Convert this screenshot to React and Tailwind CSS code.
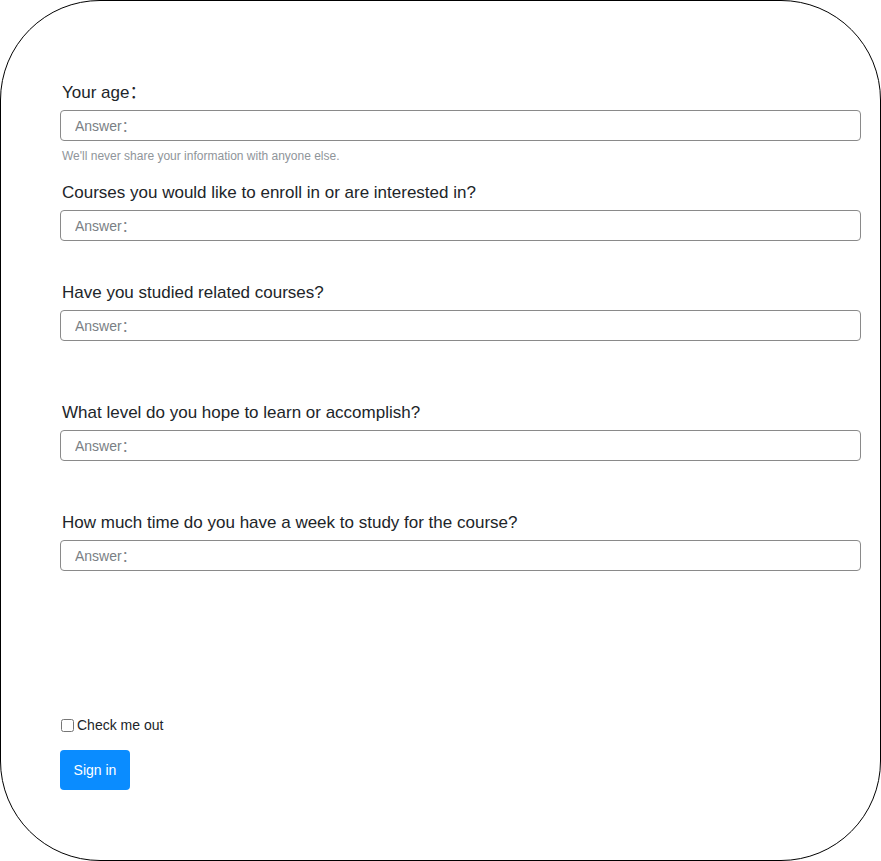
import React from 'react';

const questions = [
    { label: 'Your age：', help: true, top: 'mt-[79px]' },
    { label: 'Courses you would like to enroll in or are interested in?', top: 'mt-[16px]' },
    { label: 'Have you studied related courses?', top: 'mt-[39px]' },
    { label: 'What level do you hope to learn or accomplish?', top: 'mt-[59px]' },
    { label: 'How much time do you have a week to study for the course?', top: 'mt-[49px]' },
];

const Field = ({ q }) => (
    <div className={q.top}>
        <label className="block text-[17px] leading-6 text-[#212529] pl-[2px] pt-[1px] mb-[5px]">{q.label}</label>
        <input
            type="text"
            placeholder="Answer："
            className="block w-full h-[31px] border border-[#8a8a8a] rounded-[4px] px-[14px] text-[14px] placeholder:text-[#7a7f85] outline-none"
        />
        {q.help && (
            <small className="block mt-[7px] pl-[2px] text-[12px] leading-4 text-[#8f959a]">
                We'll never share your information with anyone else.
            </small>
        )}
    </div>
);

export default function App() {
    return (
        <div className="w-[881px] h-[861px] bg-white font-['Liberation_Sans','Noto_Sans_CJK_SC',sans-serif]">
            <form className="w-full h-full border border-black rounded-[100px] pl-[59px] pr-[19px]">
                {questions.map((q, i) => (
                    <Field key={i} q={q} />
                ))}
                <div className="mt-[144px] flex items-center gap-[3px] pl-[1px] h-5">
                    <input type="checkbox" className="w-[13px] h-[13px] m-0" />
                    <span className="text-[14px] leading-5 text-[#212529]">Check me out</span>
                </div>
                <button
                    type="button"
                    className="mt-[15px] w-[70px] h-[40px] pt-[1px] rounded-[4px] bg-[#0a8cff] text-white text-[14px]"
                >
                    Sign in
                </button>
            </form>
        </div>
    );
}
